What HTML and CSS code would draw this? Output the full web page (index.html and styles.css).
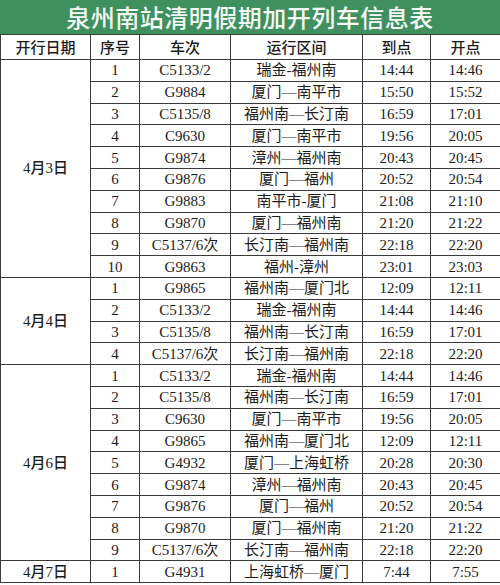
FILE: index.html
```html
<!DOCTYPE html>
<html lang="zh">
<head>
<meta charset="utf-8">
<link rel="stylesheet" href="styles.css">
</head>
<body>
<div class="page">
  <div class="title">泉州南站清明假期加开列车信息表</div>
  <table class="sched">
    <colgroup>
      <col class="c1"><col class="c2"><col class="c3"><col class="c4"><col class="c5"><col class="c6">
    </colgroup>
    <thead>
      <tr class="head"><th>开行日期</th><th>序号</th><th>车次</th><th>运行区间</th><th>到点</th><th>开点</th></tr>
    </thead>
    <tbody>
      <tr><td class="date" rowspan="10">4月3日</td><td>1</td><td>C5133/2</td><td>瑞金-福州南</td><td>14:44</td><td>14:46</td></tr>
      <tr><td>2</td><td>G9884</td><td>厦门—南平市</td><td>15:50</td><td>15:52</td></tr>
      <tr><td>3</td><td>C5135/8</td><td>福州南—长汀南</td><td>16:59</td><td>17:01</td></tr>
      <tr><td>4</td><td>C9630</td><td>厦门—南平市</td><td>19:56</td><td>20:05</td></tr>
      <tr><td>5</td><td>G9874</td><td>漳州—福州南</td><td>20:43</td><td>20:45</td></tr>
      <tr><td>6</td><td>G9876</td><td>厦门—福州</td><td>20:52</td><td>20:54</td></tr>
      <tr><td>7</td><td>G9883</td><td>南平市-厦门</td><td>21:08</td><td>21:10</td></tr>
      <tr><td>8</td><td>G9870</td><td>厦门—福州南</td><td>21:20</td><td>21:22</td></tr>
      <tr><td>9</td><td>C5137/6次</td><td>长汀南—福州南</td><td>22:18</td><td>22:20</td></tr>
      <tr><td>10</td><td>G9863</td><td>福州-漳州</td><td>23:01</td><td>23:03</td></tr>
      <tr><td class="date" rowspan="4">4月4日</td><td>1</td><td>G9865</td><td>福州南—厦门北</td><td>12:09</td><td>12:11</td></tr>
      <tr><td>2</td><td>C5133/2</td><td>瑞金-福州南</td><td>14:44</td><td>14:46</td></tr>
      <tr><td>3</td><td>C5135/8</td><td>福州南—长汀南</td><td>16:59</td><td>17:01</td></tr>
      <tr><td>4</td><td>C5137/6次</td><td>长汀南—福州南</td><td>22:18</td><td>22:20</td></tr>
      <tr><td class="date" rowspan="9">4月6日</td><td>1</td><td>C5133/2</td><td>瑞金-福州南</td><td>14:44</td><td>14:46</td></tr>
      <tr><td>2</td><td>C5135/8</td><td>福州南—长汀南</td><td>16:59</td><td>17:01</td></tr>
      <tr><td>3</td><td>C9630</td><td>厦门—南平市</td><td>19:56</td><td>20:05</td></tr>
      <tr><td>4</td><td>G9865</td><td>福州南—厦门北</td><td>12:09</td><td>12:11</td></tr>
      <tr><td>5</td><td>G4932</td><td>厦门—上海虹桥</td><td>20:28</td><td>20:30</td></tr>
      <tr><td>6</td><td>G9874</td><td>漳州—福州南</td><td>20:43</td><td>20:45</td></tr>
      <tr><td>7</td><td>G9876</td><td>厦门—福州</td><td>20:52</td><td>20:54</td></tr>
      <tr><td>8</td><td>G9870</td><td>厦门—福州南</td><td>21:20</td><td>21:22</td></tr>
      <tr><td>9</td><td>C5137/6次</td><td>长汀南—福州南</td><td>22:18</td><td>22:20</td></tr>
      <tr><td class="date">4月7日</td><td>1</td><td>G4931</td><td>上海虹桥—厦门</td><td>7:44</td><td>7:55</td></tr>
    </tbody>
  </table>
</div>
</body>
</html>
```

FILE: styles.css
```css
html, body {
  margin: 0;
  padding: 0;
  background: #ffffff;
}
.page {
  width: 500px;
  height: 585px;
  overflow: hidden;
}
.title {
  height: 34px;
  background: #3f8f5f;
  color: #f4fbf5;
  font-family: "Noto Sans CJK SC", sans-serif;
  font-size: 24px;
  font-weight: 500;
  line-height: 34px;
  text-align: center;
  letter-spacing: 0.5px;
}
.sched {
  width: 500px;
  border-collapse: collapse;
  table-layout: fixed;
  color: #1c1c1c;
  font-family: "Liberation Serif", "Noto Sans CJK SC", serif;
  font-size: 15px;
}
.c1 { width: 90px; }
.c2 { width: 49px; }
.c3 { width: 91px; }
.c4 { width: 132px; }
.c5 { width: 68px; }
.c6 { width: 70px; }
.sched th, .sched td {
  border: 1px solid #3a3a3a;
  padding: 0;
  text-align: center;
  vertical-align: middle;
  white-space: nowrap;
  overflow: hidden;
}
.head th {
  height: 24px;
  font-family: "Noto Sans CJK SC", sans-serif;
  font-weight: 500;
  font-size: 15px;
  line-height: 20px;
}
.sched tbody tr {
  height: 21.8px;
}
.sched td {
  line-height: 18px;
}
.sched td.date {
  font-family: "Liberation Serif", "Noto Sans CJK SC", serif;
  font-weight: 500;
  font-size: 15px;
}
```
